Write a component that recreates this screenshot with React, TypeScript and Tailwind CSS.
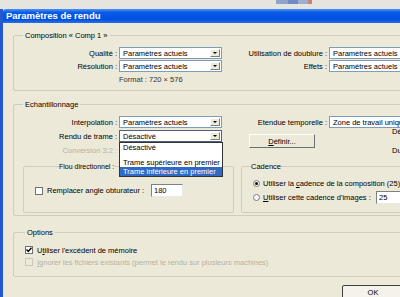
import React from "react";

function Arrow() {
  return (
    <span className="w-[10px] h-[8px] mr-[1px] shrink-0 bg-[#ece9d8] border border-t-white border-l-white border-r-[#808080] border-b-[#808080] flex items-center justify-center">
      <svg width="4" height="2" viewBox="0 0 4 2">
        <path d="M0 0h4L2 2z" fill="#000" />
      </svg>
    </span>
  );
}

function Select({ value, wide }: { value: string; wide?: boolean }) {
  return (
    <div
      className={
        wide
          ? "h-[12px] w-[100px] bg-white border border-[#7f9db9] flex items-center"
          : "h-[12px] w-[103px] bg-white border border-[#7f9db9] flex items-center justify-between"
      }
    >
      <span className="pl-[3px] whitespace-nowrap overflow-hidden">{value}</span>
      {!wide && <Arrow />}
    </div>
  );
}

function Label({ children }: { children: React.ReactNode }) {
  return <div className="text-right pr-[2px] whitespace-nowrap">{children}</div>;
}

function Check({ checked, disabled }: { checked?: boolean; disabled?: boolean }) {
  return (
    <span
      className={
        disabled
          ? "w-[8px] h-[8px] shrink-0 border border-[#c9c7ba] bg-[#ece9d8]"
          : "w-[8px] h-[8px] shrink-0 border border-[#6f6f6f] bg-white flex items-center justify-center"
      }
    >
      {checked && (
        <svg width="6" height="6" viewBox="0 0 6 6">
          <path d="M0.5 2.5 L2.3 4.5 L5.5 0.8" stroke="#000" strokeWidth="1.4" fill="none" />
        </svg>
      )}
    </span>
  );
}

function Radio({ checked }: { checked?: boolean }) {
  return (
    <span className="w-[7px] h-[7px] shrink-0 rounded-full border border-[#7a7a7a] bg-white flex items-center justify-center">
      {checked && <span className="w-[3px] h-[3px] rounded-full bg-black" />}
    </span>
  );
}

function Input({ value, w }: { value: string; w: string }) {
  return (
    <div
      className={
        w +
        " h-[13px] bg-white border border-t-[#808080] border-l-[#808080] border-r-[#e8e8e8] border-b-[#e8e8e8] flex items-center pl-[2px]"
      }
    >
      {value}
    </div>
  );
}

export default function App() {
  return (
    <div className="w-[400px] h-[297px] overflow-hidden relative bg-[#ece9d8] text-[7.5px] leading-[9px] text-black font-['Liberation_Sans',Arial,sans-serif]">
      {/* top strip */}
      <div className="h-[9px] bg-[#e6e4df] flex items-start">
        <div className="ml-[276px] flex h-[4px]">
          <span className="w-[12px] bg-[#8fa3cc]" />
          <span className="w-[10px] bg-[#6f8ac4]" />
          <span className="w-[10px] bg-[#9eaed0]" />
          <span className="w-[4px] bg-[#c0867a]" />
        </div>
      </div>

      <div className="flex h-[288px]">
        <div className="w-[3px] bg-[#2458d0]" />
        <div className="flex-1 flex flex-col min-w-0">
          {/* title bar */}
          <div className="h-[14px] shrink-0 flex items-center pl-[3px] rounded-tl-[3px] text-white font-bold text-[9.5px] leading-[12px] bg-[linear-gradient(to_bottom,#4a92f6,#0a5ae6_25%,#0050e0_75%,#2a70ea)]">
            Paramètres de rendu
          </div>

          {/* body */}
          <div className="flex-1 flex flex-col items-start pl-[10px]">
            {/* Composition */}
            <fieldset className="mt-[8px] w-[400px] h-[60px] border border-[#d0cdbe] rounded-[2px]">
              <legend className="ml-[9px] px-[2px] leading-[9px]">Composition « Comp 1 »</legend>
              <div className="mt-[7px] grid grid-cols-[105px_103px_107px_100px] gap-y-[1px] items-center">
                <Label>Qualité :</Label>
                <Select value="Paramètres actuels" />
                <Label>Utilisation de doublure :</Label>
                <Select value="Paramètres actuels" wide />
                <Label>Résolution :</Label>
                <Select value="Paramètres actuels" />
                <Label>Effets :</Label>
                <Select value="Paramètres actuels" wide />
                <div className="h-[12px]" />
                <div className="h-[12px] flex items-center text-[#333] whitespace-nowrap">Format : 720 × 576</div>
                <div />
                <div />
              </div>
            </fieldset>

            {/* Echantillonnage */}
            <fieldset className="mt-[9px] w-[400px] h-[116px] border border-[#d0cdbe] rounded-[2px]">
              <legend className="ml-[9px] px-[2px] leading-[9px]">Echantillonnage</legend>
              <div className="mt-[7px] grid grid-cols-[105px_103px_107px_100px] grid-rows-[12px_12px_12px] gap-y-[2px] items-center">
                <Label>Interpolation :</Label>
                <Select value="Paramètres actuels" />
                <Label>Etendue temporelle :</Label>
                <Select value="Zone de travail uniquement" wide />

                <Label>Rendu de trame :</Label>
                <div className="h-[12px] w-[103px] bg-white border border-[#4d6185] flex items-center justify-between">
                  <span className="pl-[3px]">Désactivé</span>
                  <Arrow />
                </div>
                <div className="h-[12px]">
                  <div className="ml-[27px] mt-[4px] w-[66px] h-[14px] border border-t-white border-l-white border-r-[#6f6f6f] border-b-[#6f6f6f] bg-[#ece9d8] flex items-center justify-center">
                    <span>
                      <span className="underline">D</span>éfinir...
                    </span>
                  </div>
                </div>
                <div className="h-[12px] pl-[63px] -mt-[6px] whitespace-nowrap">Dé</div>

                <div className="text-right pr-[2px] whitespace-nowrap text-[#b5b2a4]">Conversion 3:2 :</div>
                <div />
                <div />
                <div className="pl-[63px] whitespace-nowrap">Du</div>
              </div>

              <div className="mt-[6px] pl-[9px] flex gap-[7px]">
                <fieldset className="w-[211px] h-[51px] border border-[#d0cdbe] rounded-[2px]">
                  <legend className="ml-[35px] px-0 leading-[9px] text-[7px]">Flou directionnel :</legend>
                  <div className="mt-[13px] pl-[11px] h-[13px] flex items-center">
                    <Check />
                    <span className="ml-[4px] w-[104px] whitespace-nowrap">Remplacer angle obturateur :</span>
                    <Input value="180" w="w-[32px]" />
                  </div>
                </fieldset>
                <fieldset className="w-[200px] h-[51px] border border-[#d0cdbe] rounded-[2px]">
                  <legend className="ml-[9px] px-0 leading-[9px]">Cadence</legend>
                  <div className="mt-[7px] pl-[11px] h-[10px] flex items-center whitespace-nowrap">
                    <Radio checked />
                    <span className="ml-[3px]">
                      Utiliser la <span className="underline">c</span>adence de la composition (25)
                    </span>
                  </div>
                  <div className="mt-[3px] pl-[11px] h-[13px] flex items-center whitespace-nowrap">
                    <Radio />
                    <span className="ml-[3px] w-[113px]">
                      <span className="underline">U</span>tiliser cette cadence d'images :
                    </span>
                    <Input value="25" w="w-[40px]" />
                  </div>
                </fieldset>
              </div>
            </fieldset>

            {/* Options */}
            <fieldset className="mt-[12px] w-[400px] h-[49px] border border-[#d0cdbe] rounded-[2px]">
              <legend className="ml-[11px] px-[2px] leading-[9px]">Options</legend>
              <div className="mt-[8px] pl-[11px] flex flex-col gap-[2px]">
                <div className="h-[10px] flex items-center whitespace-nowrap">
                  <Check checked />
                  <span className="ml-[4px]">
                    U<span className="underline">t</span>iliser l'excédent de mémoire
                  </span>
                </div>
                <div className="h-[10px] flex items-center whitespace-nowrap text-[#b5b2a4]">
                  <Check disabled />
                  <span className="ml-[4px]">
                    <span className="underline">I</span>gnorer les fichiers existants (permet le rendu sur plusieurs machines)
                  </span>
                </div>
              </div>
            </fieldset>

            {/* OK */}
            <div className="mt-[8px] ml-[329px] w-[62px] h-[22px] shrink-0 border border-[#404040] rounded-[2px] bg-[#f4f2ea] flex justify-center pt-[2px]">
              OK
            </div>
          </div>
        </div>
      </div>

      {/* opened dropdown list */}
      <div className="absolute left-[119px] top-[142px] w-[104px] bg-white border border-[#333] flex flex-col">
        <div className="h-[9px] pl-[3px] flex items-center">Désactivé</div>
        <div className="h-[6px]" />
        <div className="h-[9px] pl-[3px] flex items-center whitespace-nowrap">Trame supérieure en premier</div>
        <div className="h-[9px] pl-[3px] flex items-center whitespace-nowrap bg-[#316ac5] text-white">
          Trame inférieure en premier
        </div>
      </div>
    </div>
  );
}
